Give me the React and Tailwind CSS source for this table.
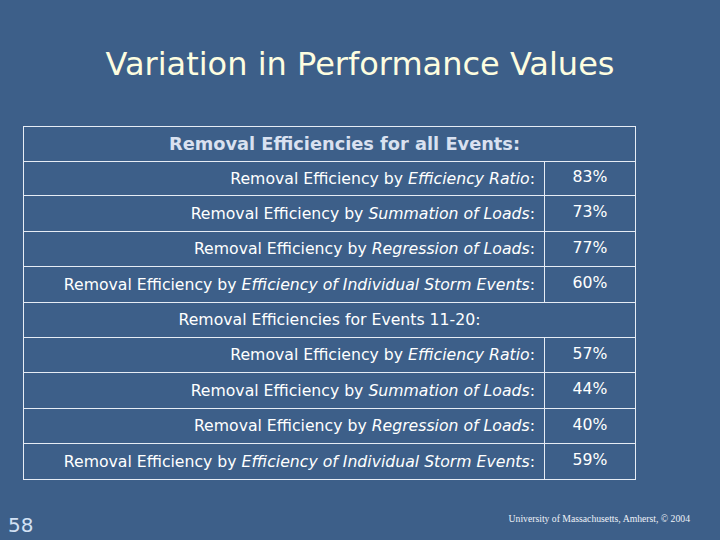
import React from "react";

const font = { fontFamily: '"DejaVu Sans", Verdana, sans-serif' };

function Row({ it, pct, h }) {
  return (
    <div className={`flex border-b border-[#e6ecf5] ${h}`}>
      <div className="flex-1 flex items-center justify-end pr-[9px] border-r border-[#e6ecf5]">
        <span>
          Removal Efficiency by <i>{it}</i>:
        </span>
      </div>
      <div className="w-[90px] flex items-center justify-center pb-[3px]">{pct}</div>
    </div>
  );
}

export default function App() {
  const g1 = [
    ["Efficiency Ratio", "83%", "h-[34px]"],
    ["Summation of Loads", "73%", "h-[36px]"],
    ["Regression of Loads", "77%", "h-[35px]"],
    ["Efficiency of Individual Storm Events", "60%", "h-[36px]"],
  ];
  const g2 = [
    ["Efficiency Ratio", "57%", "h-[35px]"],
    ["Summation of Loads", "44%", "h-[36px]"],
    ["Regression of Loads", "40%", "h-[35px]"],
    ["Efficiency of Individual Storm Events", "59%", "h-[36px]"],
  ];
  return (
    <div className="w-[720px] h-[540px] bg-[#3d5f89] flex flex-col overflow-hidden" style={font}>
      <div className="h-[126px] flex justify-center pt-[44px]">
        <h1 className="text-[32px] leading-[40px] text-[#fdfde0]">
          Variation in Performance Values
        </h1>
      </div>
      <div className="ml-[23px] w-[613px] border border-[#e6ecf5] text-white text-[15.7px]">
        <div className="h-[35px] flex items-center justify-center border-b border-[#e6ecf5] pl-[30px] font-bold text-[#d9e1f0] text-[17.8px]">
          Removal Efficiencies for all Events:
        </div>
        {g1.map(([it, p, h]) => (
          <Row key={it} it={it} pct={p} h={h} />
        ))}
        <div className="h-[35px] flex items-center justify-center border-b border-[#e6ecf5]">
          Removal Efficiencies for Events 11-20:
        </div>
        {g2.map(([it, p, h], i) => (
          <Row key={it} it={it} pct={p} h={i === 3 ? "h-[35px] border-b-0" : h} />
        ))}
      </div>
      <div className="flex-1 flex items-end justify-between pl-[8px] pr-[30px] pb-[3px]">
        <span className="text-[20px] leading-[24px] text-[#d3e1f4]">58</span>
        <span
          className="text-[9.7px] text-[#eef2f8] mb-[10px]"
          style={{ fontFamily: '"Liberation Serif", serif' }}
        >
          University of Massachusetts, Amherst, © 2004
        </span>
      </div>
    </div>
  );
}
